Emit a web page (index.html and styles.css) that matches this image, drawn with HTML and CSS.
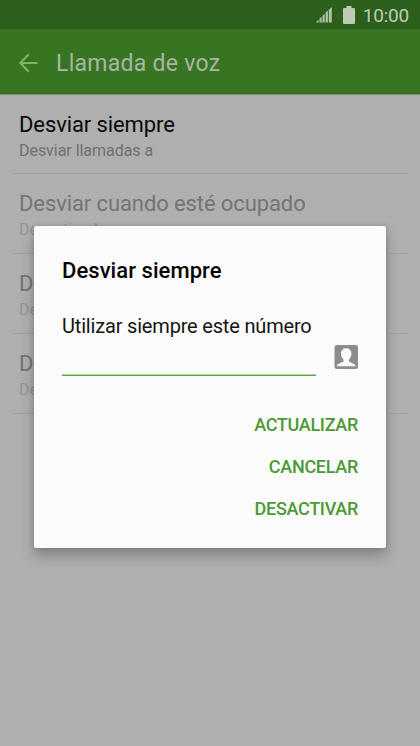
FILE: index.html
```html
<!DOCTYPE html>
<html lang="es">
<head>
<meta charset="utf-8">
<title>Llamada de voz</title>
<link rel="stylesheet" href="styles.css">
</head>
<body>
<div class="screen">
  <div class="status">
    <svg class="signal" width="16" height="16" viewBox="0 0 16 16"><path d="M.5 15.500v-1l2-1.800v2.800zM3.400 15.500v-3.700l2.200-2.100v5.800zM6.500 15.500V8.800l2.200-2.100v8.800zM9.600 15.500V5.800l2.300-2.200v11.900zM12.800 15.500V2.700L15.800 0v15.500z"/></svg>
    <svg class="battery" width="12" height="18" viewBox="0 0 12 18"><path d="M3.500 0h5v2H11q1 0 1 1v14q0 1-1 1H1q-1 0-1-1V3q0-1 1-1h2.500z"/></svg>
    <span class="clock">10:00</span>
  </div>
  <header class="bar">
    <svg class="back" width="20" height="20" viewBox="0 0 20 20"><path d="M10.800 1.200 2.300 10l8.500 8.800M2.300 10H19.500"/></svg>
    <h1 class="heading"><span>Llamada de voz</span></h1>
  </header>
  <main class="list">
    <div class="row"><div class="name"><span>Desviar siempre</span></div><div class="sub"><span>Desviar llamadas a</span></div></div>
    <div class="row off"><div class="name"><span>Desviar cuando esté ocupado</span></div><div class="sub">Desactivado</div></div>
    <div class="row off"><div class="name">Desviar si no hay respuesta</div><div class="sub">Desactivado</div></div>
    <div class="row off"><div class="name">Desviar si no disponible</div><div class="sub">Desactivado</div></div>
  </main>
  <div class="dialog">
    <h2 class="title"><span>Desviar siempre</span></h2>
    <div class="label"><span>Utilizar siempre este número</span></div>
    <div class="entry">
      <div class="field"></div>
      <svg class="contact" width="24" height="24" viewBox="0 0 24 24"><rect x=".5" width="23.500" height="24" rx="2.500" fill="#8c8c8c"/><path fill="#fbfbfb" d="M12.200 3.200c3.200 0 5.200 2 5.200 5.200 0 2.700-1.100 4.900-2.500 6.200v2c1.600 1.300 5.800 1.500 6.800 4.600h-19c1-3.100 5.200-3.300 6.800-4.600v-2C8.100 13.300 7 11.100 7 8.400c0-3.200 2-5.200 5.200-5.200z"/></svg>
    </div>
    <div class="actions">
      <div class="action">ACTUALIZAR</div>
      <div class="action">CANCELAR</div>
      <div class="action">DESACTIVAR</div>
    </div>
  </div>
</div>
</body>
</html>
```
FILE: styles.css
```css
* { box-sizing: border-box; }
body { margin: 0; font-family: Roboto, sans-serif; }
.screen { position: relative; width: 420px; height: 746px; overflow: hidden; background: #afafaf; }
.status { height: 29px; padding: 0 11px 0 0; background: #2c5f1b; display: flex; justify-content: flex-end; align-items: center; color: #bccbb6; }
.signal { fill: #b0c2a9; margin-right: 11px; }
.battery { fill: #bccbb6; margin-right: 8px; }
.clock { font-size: 19px; line-height: 29px; padding-top: 2px; letter-spacing: -.2px; }
.bar { height: 66px; padding-left: 18px; background: #377523; border-bottom: 1px solid #79936f; display: flex; align-items: center; }
.back { fill: none; stroke: #82b562; stroke-width: 2; margin-top: 2px; }
.heading { margin: 4px 0 0 18px; font-size: 23px; line-height: 28px; font-weight: 400; letter-spacing: .28px; color: #a9b5a4; }
.list { padding: 0 12px; }
.row { height: 80px; padding: 16px 7px 0; border-bottom: 1px solid #a1a1a1; white-space: nowrap; overflow: hidden; }
.row:first-child { height: 79px; }
.name { font-size: 22px; line-height: 28px; letter-spacing: -.1px; color: #080808; }
.sub { font-size: 16px; line-height: 20px; margin-top: 2px; letter-spacing: -.04px; color: #707070; }
.off .name { color: #747474; }
.off .sub { color: #949494; }
.dialog { position: absolute; left: 34px; top: 226px; width: 352px; height: 322px; padding: 31px 28px 0; border-radius: 2px; background: #fbfbfb; box-shadow: 0 8px 14px rgba(0,0,0,.25), 0 0 5px rgba(0,0,0,.15); }
.title { margin: 0; font-size: 22px; line-height: 28px; font-weight: 500; letter-spacing: .06px; color: #050505; }
.label { margin-top: 28px; font-size: 20px; line-height: 26px; letter-spacing: -.18px; color: #151515; white-space: nowrap; }
.entry { display: flex; justify-content: space-between; height: 37px; padding-top: 6px; }
.field { width: 254px; height: 31px; background: linear-gradient(#a9dc96 50%, #5aa548 50%) bottom / 100% 2px no-repeat; }
.contact { display: block; }
.actions { margin-top: 28px; text-align: right; }
.action { font-size: 18px; line-height: 42px; font-weight: 500; letter-spacing: -.3px; color: #4b9a35; }
```
